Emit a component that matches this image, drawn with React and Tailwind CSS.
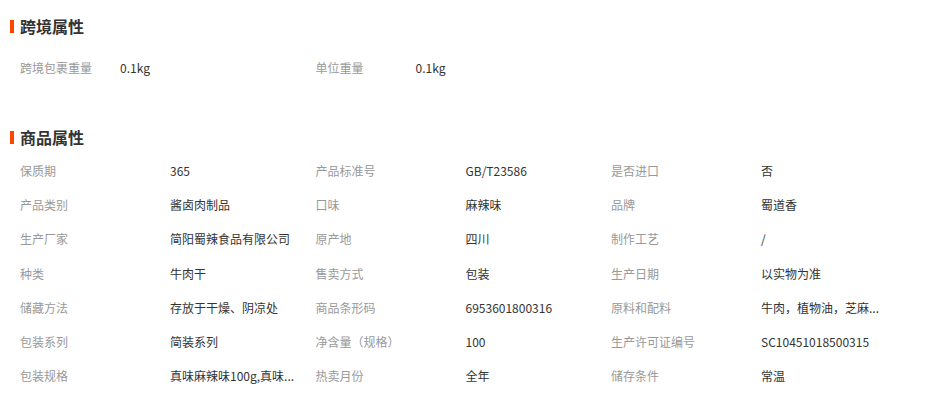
const crossAttrs = [
  { label: "跨境包裹重量", value: "0.1kg" },
  { label: "单位重量", value: "0.1kg" },
];

const productAttrs = [
  { label: "保质期", value: "365" },
  { label: "产品标准号", value: "GB/T23586" },
  { label: "是否进口", value: "否" },
  { label: "产品类别", value: "酱卤肉制品" },
  { label: "口味", value: "麻辣味" },
  { label: "品牌", value: "蜀道香" },
  { label: "生产厂家", value: "简阳蜀辣食品有限公司" },
  { label: "原产地", value: "四川" },
  { label: "制作工艺", value: "/" },
  { label: "种类", value: "牛肉干" },
  { label: "售卖方式", value: "包装" },
  { label: "生产日期", value: "以实物为准" },
  { label: "储藏方法", value: "存放于干燥、阴凉处" },
  { label: "商品条形码", value: "6953601800316" },
  { label: "原料和配料", value: "牛肉，植物油，芝麻..." },
  { label: "包装系列", value: "简装系列" },
  { label: "净含量（规格）", value: "100" },
  { label: "生产许可证编号", value: "SC10451018500315" },
  { label: "包装规格", value: "真味麻辣味100g,真味..." },
  { label: "热卖月份", value: "全年" },
  { label: "储存条件", value: "常温" },
];

function SectionTitle({ children }) {
  return (
    <h3 className="flex items-center h-5 text-[16px] font-bold text-[#333]">
      <span className="w-1 h-[13px] bg-[#ff4400] mr-[6px]" />
      {children}
    </h3>
  );
}

export default function App() {
  return (
    <div
      className="w-[946px] h-[400px] bg-white pt-4 pl-[10px] overflow-hidden"
      style={{ fontFamily: '"Noto Sans CJK SC", "Noto Sans", sans-serif' }}
    >
      <SectionTitle>跨境属性</SectionTitle>
      <ul className="mt-[15px] pl-[10px] flex text-[12px]">
        {crossAttrs.map((a) => (
          <li key={a.label} className="w-[295.5px] h-[34px] flex items-center">
            <span className="w-[100px] shrink-0 text-[#999]">{a.label}</span>
            <span className="text-[#333]">{a.value}</span>
          </li>
        ))}
      </ul>

      <div className="mt-[42px]">
        <SectionTitle>商品属性</SectionTitle>
      </div>
      <ul className="mt-[7px] pl-[10px] grid grid-cols-[repeat(3,295.5px)] text-[12px]">
        {productAttrs.map((a) => (
          <li key={a.label} className="h-[34.17px] flex items-center">
            <span className="w-[150px] shrink-0 text-[#999]">{a.label}</span>
            <span className="whitespace-nowrap text-[#333]">{a.value}</span>
          </li>
        ))}
      </ul>
    </div>
  );
}
